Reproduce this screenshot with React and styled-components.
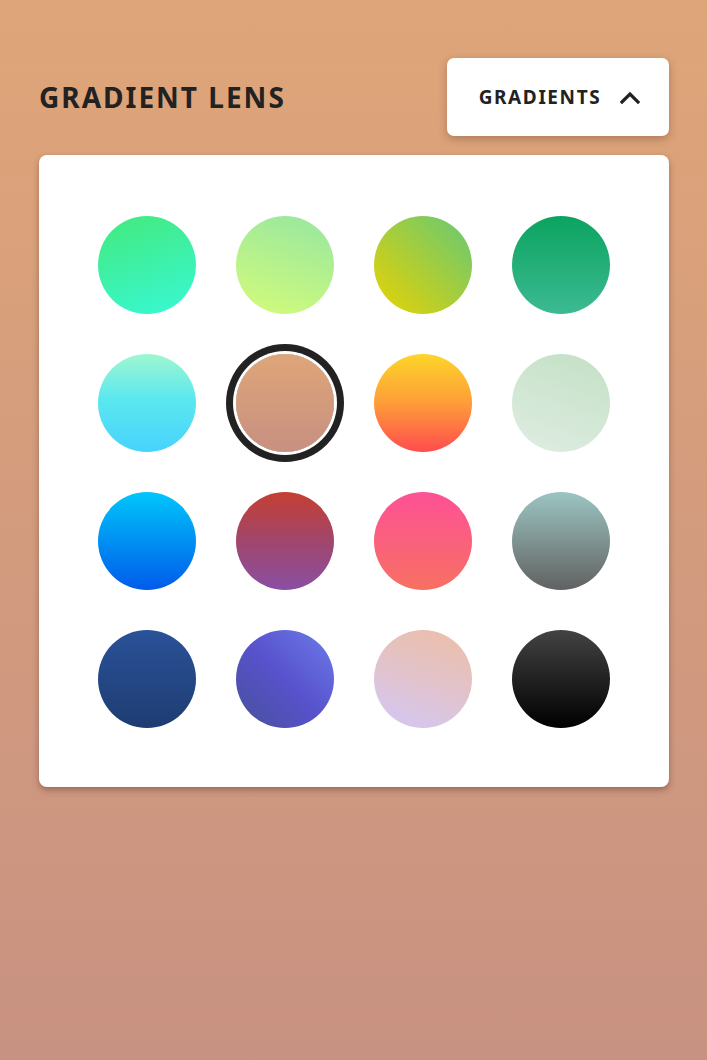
import React from "react";
import styled, { createGlobalStyle } from "styled-components";

const GlobalStyle = createGlobalStyle`
  html, body { margin: 0; padding: 0; }
  body {
    min-height: 1060px;
    background: linear-gradient(to bottom, #dfa579 0%, #c89282 100%);
    font-family: "Noto Sans", "Open Sans", sans-serif;
  }
`;

const Page = styled.div`
  min-height: 1060px;
  box-sizing: border-box;
  padding: 58px 38px 0 39px;
  display: flex;
  flex-direction: column;
  gap: 19px;
`;

const Header = styled.header`
  display: flex;
  align-items: center;
  justify-content: space-between;
  height: 78px;
`;

const Title = styled.h1`
  margin: 0;
  font-size: 28px;
  font-weight: 700;
  letter-spacing: 2px;
  color: #222;
`;

const MenuButton = styled.button`
  width: 222px;
  height: 78px;
  border: none;
  border-radius: 7px;
  background: #fff;
  box-shadow: 0 3px 8px rgba(90, 50, 30, 0.35);
  display: flex;
  align-items: center;
  justify-content: center;
  gap: 19px;
  padding: 0 0 0 3px;
  font-family: inherit;
  font-size: 19px;
  font-weight: 700;
  letter-spacing: 1.6px;
  color: #222;
  cursor: pointer;
`;

const Card = styled.section`
  width: 630px;
  height: 632px;
  box-sizing: border-box;
  background: #fff;
  border-radius: 8px;
  box-shadow: 0 3px 6px rgba(90, 50, 30, 0.45);
  padding: 61px 59px;
  display: grid;
  grid-template-columns: repeat(4, 98px);
  grid-auto-rows: 98px;
  gap: 40px;
`;

const Swatch = styled.button`
  width: 98px;
  height: 98px;
  border-radius: 50%;
  border: none;
  padding: 0;
  background: ${(p) => p.$bg};
  box-shadow: ${(p) => (p.$selected ? "0 0 0 3px #fff, 0 0 0 10px #222" : "none")};
  cursor: pointer;
`;

const gradients = [
  "linear-gradient(160deg, #43e97b 0%, #38f9d7 100%)",
  "linear-gradient(20deg, #d4fc79 0%, #96e6a1 100%)",
  "linear-gradient(45deg, #e6d504 0%, #c2cf23 30%, #63c977 100%)",
  "linear-gradient(to bottom, #0ba360 0%, #3cba92 100%)",
  "linear-gradient(to bottom, #9ef7d0 0%, #5ce8ee 45%, #46d3fd 100%)",
  "linear-gradient(to bottom, #dfa579 0%, #c79081 100%)",
  "linear-gradient(to bottom, #fdd52a 0%, #fe9d38 50%, #ff4c4f 100%)",
  "linear-gradient(20deg, #dfede2 0%, #c3e0c5 100%)",
  "linear-gradient(to bottom, #00c6fb 0%, #005bea 100%)",
  "linear-gradient(to bottom, #c43f33 0%, #a1466c 50%, #8a4ea3 100%)",
  "linear-gradient(to bottom, #fe5196 0%, #f77062 100%)",
  "linear-gradient(to bottom, #9bc5c3 0%, #616161 100%)",
  "linear-gradient(to bottom, #2a5298 0%, #1e3c72 100%)",
  "linear-gradient(45deg, #48509a 0%, #5852cd 50%, #6c7de9 100%)",
  "linear-gradient(20deg, #d2c7f8 0%, #e2c3cb 50%, #ecbea5 100%)",
  "linear-gradient(to bottom, #434343 0%, #000000 100%)",
];

const Chevron = () => (
  <svg width="20" height="14" viewBox="0 0 20 14" fill="none">
    <path d="M2 12 L10 4 L18 12" stroke="#222" strokeWidth="3.2" strokeLinecap="square" strokeLinejoin="miter" />
  </svg>
);

export default function App() {
  return (
    <>
      <GlobalStyle />
      <Page>
        <Header>
          <Title>GRADIENT LENS</Title>
          <MenuButton>
            GRADIENTS
            <Chevron />
          </MenuButton>
        </Header>
        <Card>
          {gradients.map((g, i) => (
            <Swatch key={i} $bg={g} $selected={i === 5} aria-label={`gradient ${i + 1}`} />
          ))}
        </Card>
      </Page>
    </>
  );
}
